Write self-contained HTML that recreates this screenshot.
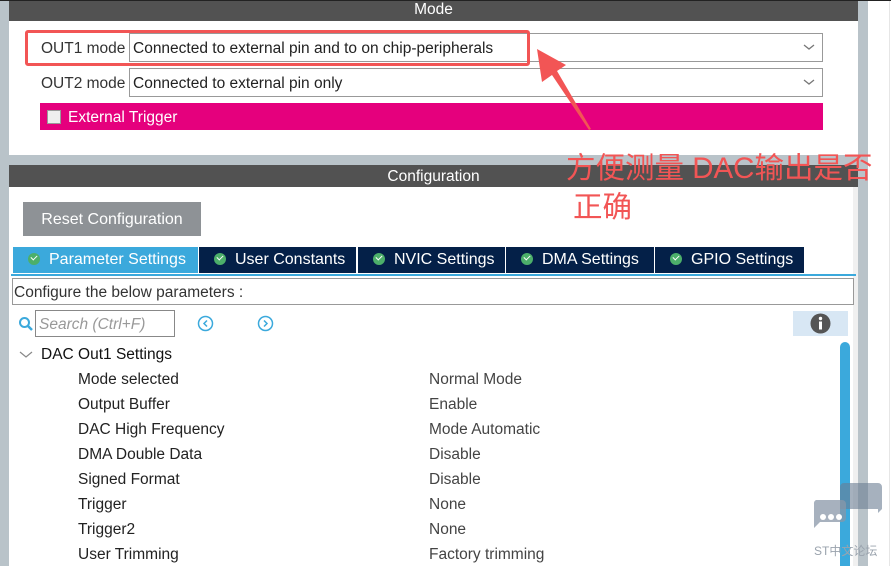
<!DOCTYPE html>
<html><head><meta charset="utf-8"><style>
*{margin:0;padding:0;box-sizing:border-box}
body{width:891px;height:566px;overflow:hidden;background:#fff;font-family:"Liberation Sans","Noto Sans CJK SC",sans-serif;font-size:15.5px;color:#222;position:relative}
.a{position:absolute}
.hdr{background:#525252;color:#fff;text-align:center;font-size:15.5px}
.sel{border:1px solid #999;background:#fff;height:29px;font-size:15.5px;padding:6px 0 0 3px;color:#222}
.chev{position:absolute;right:6px;top:6px;width:14px;height:14px}
.tab{position:absolute;top:247px;height:26px;background:#042048;color:#fff;font-size:16px;padding-top:4px;white-space:nowrap}
.tab i{display:inline-block;width:12px;height:12px;border-radius:50%;background:#4caf6a;vertical-align:-1px;margin-right:9px;position:relative}
.tab i:after{content:"";position:absolute;left:3px;top:2px;width:5px;height:3px;border-left:1.5px solid #fff;border-bottom:1.5px solid #fff;transform:rotate(-45deg)}
.row{position:absolute;font-size:15.5px;color:#222}
</style></head><body>
<div class="a" style="left:0;top:0;width:891px;height:1px;background:#222"></div>
<div class="a" style="left:0;top:1px;width:9px;height:565px;background:#b9c3c9"></div>
<div class="a" style="left:858px;top:1px;width:10px;height:565px;background:#b9c3c9"></div>
<div class="a" style="left:853px;top:187px;width:5px;height:379px;background:#f0f0f0"></div>
<div class="a" style="left:889px;top:1px;width:1px;height:565px;background:#e6e6e6"></div>
<div class="a" style="left:9px;top:155px;width:849px;height:10px;background:#b9c3c9"></div>
<div class="a hdr" style="left:9px;top:1px;width:849px;height:20px;line-height:18px">Mode</div>
<div class="a hdr" style="left:9px;top:165px;width:849px;height:22px;line-height:23px">Configuration</div>

<div class="a" style="left:41px;top:40px;color:#333">OUT1 mode</div>
<div class="a sel" style="left:129px;top:33px;width:694px">Connected to external pin and to on chip-peripherals<svg class="chev" viewBox="0 0 14 14"><path d="M2 5l5 4 5-4" fill="none" stroke="#777" stroke-width="1.3"/></svg></div>
<div class="a" style="left:41px;top:75px;color:#333">OUT2 mode</div>
<div class="a sel" style="left:129px;top:68px;width:694px">Connected to external pin only<svg class="chev" viewBox="0 0 14 14"><path d="M2 5l5 4 5-4" fill="none" stroke="#777" stroke-width="1.3"/></svg></div>
<div class="a" style="left:40px;top:103px;width:783px;height:27px;background:#e5007d;color:#fff;padding:6px 0 0 28px">External Trigger</div>
<div class="a" style="left:47px;top:110px;width:14px;height:14px;background:#eee;border:1px solid #999"></div>
<div class="a" style="left:25px;top:30px;width:505px;height:36px;border:3px solid #f25555;border-radius:3px"></div>
<svg class="a" style="left:530px;top:40px" width="70" height="95" viewBox="0 0 70 95"><path d="M7 9 L12 42 L22 35 L59 90 L61 89 L27 31 L36 25 Z" fill="#f25555"/></svg>

<div class="a" style="left:566px;top:152px;font-size:29.5px;color:#f25555;line-height:34px;white-space:nowrap;z-index:5">方便测量 DAC输出是否</div>
<div class="a" style="left:573px;top:191px;font-size:29.5px;color:#f25555;line-height:34px">正确</div>

<div class="a" style="left:23px;top:202px;width:178px;height:34px;background:#8e9296;color:#fff;font-size:16px;text-align:center;line-height:35px">Reset Configuration</div>

<div class="tab" style="left:13px;width:185px;background:#3ba9dc;padding-left:15px"><i></i>Parameter Settings</div>
<div class="tab" style="left:199px;width:157px;padding-left:15px"><i></i>User Constants</div>
<div class="tab" style="left:358px;width:147px;padding-left:15px"><i></i>NVIC Settings</div>
<div class="tab" style="left:506px;width:148px;padding-left:15px"><i></i>DMA Settings</div>
<div class="tab" style="left:655px;width:149px;padding-left:15px"><i></i>GPIO Settings</div>
<div class="a" style="left:11px;top:274px;width:845px;height:2px;background:#3ba9dc"></div>
<div class="a" style="left:12px;top:278px;width:842px;height:27px;border:1px solid #999;padding:5px 0 0 1px;color:#333">Configure the below parameters :</div>

<svg class="a" style="left:18px;top:316px" width="16" height="16" viewBox="0 0 16 16"><circle cx="6.5" cy="6.5" r="4.5" fill="none" stroke="#3ba9dc" stroke-width="2"/><path d="M10 10l4 4" stroke="#3ba9dc" stroke-width="2.5"/></svg>
<div class="a" style="left:35px;top:310px;width:140px;height:27px;border:1px solid #888;color:#999;font-style:italic;padding:5px 0 0 3px">Search (Ctrl+F)</div>
<svg class="a" style="left:197px;top:315px" width="17" height="17" viewBox="0 0 17 17"><circle cx="8.5" cy="8.5" r="7" fill="none" stroke="#3ba9dc" stroke-width="1.5"/><path d="M10 5.5L7 8.5l3 3" fill="none" stroke="#3ba9dc" stroke-width="1.5"/></svg>
<svg class="a" style="left:257px;top:315px" width="17" height="17" viewBox="0 0 17 17"><circle cx="8.5" cy="8.5" r="7" fill="none" stroke="#3ba9dc" stroke-width="1.5"/><path d="M7 5.5l3 3-3 3" fill="none" stroke="#3ba9dc" stroke-width="1.5"/></svg>
<div class="a" style="left:793px;top:311px;width:55px;height:25px;background:#d8e7f4"></div>
<svg class="a" style="left:810px;top:313px" width="21" height="21" viewBox="0 0 21 21"><circle cx="10.5" cy="10.5" r="10" fill="#555"/><rect x="9" y="8.5" width="3" height="8" fill="#fff"/><circle cx="10.5" cy="5.5" r="1.7" fill="#fff"/></svg>
<div class="a" style="left:840px;top:342px;width:10px;height:224px;background:#3ba9dc;border-radius:5px 5px 0 0"></div>

<svg class="a" style="left:19px;top:349px" width="14" height="10" viewBox="0 0 14 10"><path d="M1 3l6 5 6-5" fill="none" stroke="#888" stroke-width="1.2"/></svg>
<div class="row" style="left:41px;top:346px;color:#111">DAC Out1 Settings</div>
<div class="row" style="left:78px;top:371px">Mode selected</div><div class="row" style="left:429px;top:371px;color:#444">Normal Mode</div>
<div class="row" style="left:78px;top:396px">Output Buffer</div><div class="row" style="left:429px;top:396px;color:#444">Enable</div>
<div class="row" style="left:78px;top:421px">DAC High Frequency</div><div class="row" style="left:429px;top:421px;color:#444">Mode Automatic</div>
<div class="row" style="left:78px;top:446px">DMA Double Data</div><div class="row" style="left:429px;top:446px;color:#444">Disable</div>
<div class="row" style="left:78px;top:471px">Signed Format</div><div class="row" style="left:429px;top:471px;color:#444">Disable</div>
<div class="row" style="left:78px;top:496px">Trigger</div><div class="row" style="left:429px;top:496px;color:#444">None</div>
<div class="row" style="left:78px;top:521px">Trigger2</div><div class="row" style="left:429px;top:521px;color:#444">None</div>
<div class="row" style="left:78px;top:546px">User Trimming</div><div class="row" style="left:429px;top:546px;color:#444">Factory trimming</div>

<svg class="a" style="left:810px;top:480px;z-index:4" width="75" height="60" viewBox="0 0 75 60"><path d="M34 3h34a4 4 0 0 1 4 4v22l-4 4v-4H30V7a4 4 0 0 1 4-4z" fill="#6a7d92" opacity=".6"/><path d="M6 20h26a4 4 0 0 1 4 4v14a4 4 0 0 1-4 4H10l-6 6V24a4 4 0 0 1 2-4z" fill="#8a97a8" opacity=".75"/><circle cx="13" cy="37" r="3" fill="#fff"/><circle cx="21" cy="37" r="3" fill="#fff"/><circle cx="29" cy="37" r="3" fill="#fff"/></svg>
<div class="a" style="left:814px;top:542px;font-size:12px;color:#9aa3ad;white-space:nowrap;z-index:4">ST中文论坛</div>
</body></html>
